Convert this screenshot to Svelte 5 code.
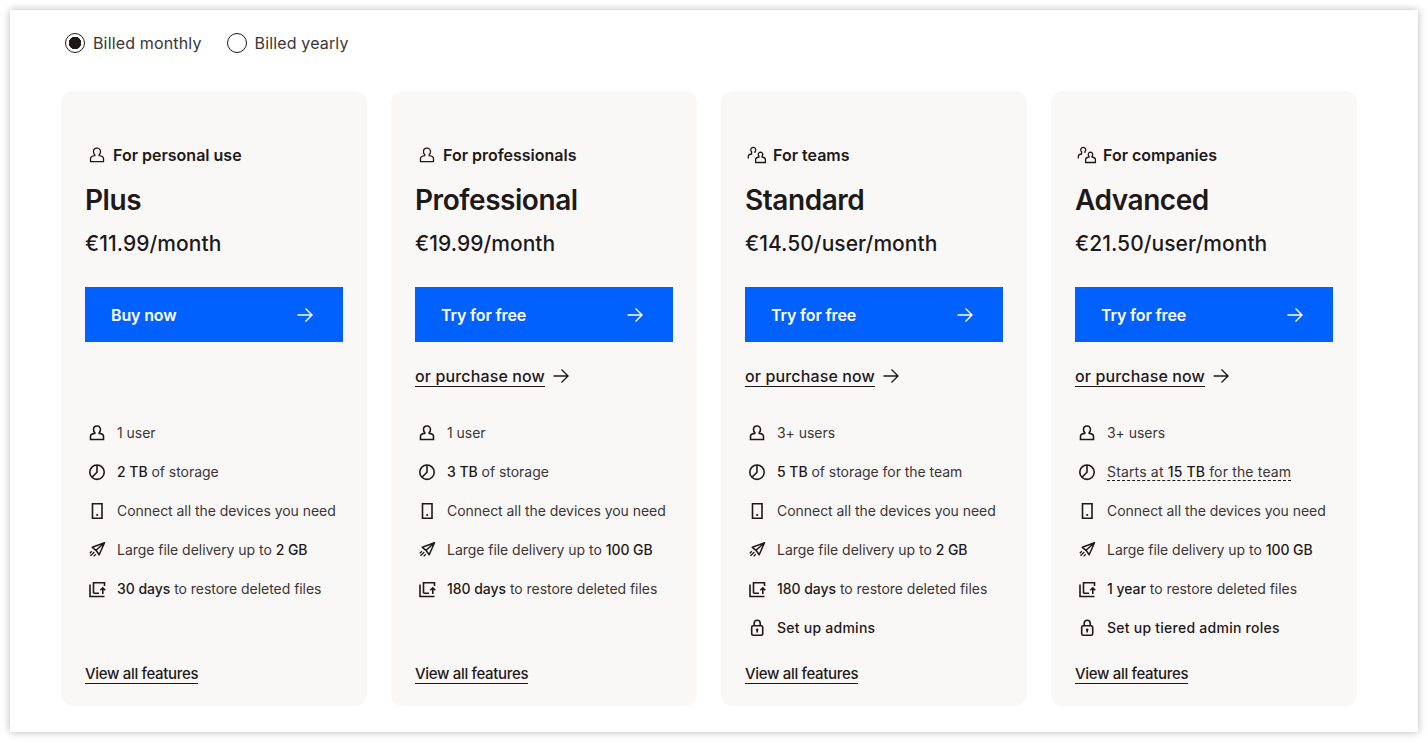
<script>
	const plans = [
		{
			audience: "For personal use",
			team: false,
			name: "Plus",
			price: "€11.99/month",
			cta: "Buy now",
			purchase: false,
			features: [
				{ icon: "user", html: "1 user" },
				{ icon: "pie", html: "<b>2 TB</b> of storage" },
				{ icon: "device", html: "Connect all the devices you need" },
				{ icon: "send", html: "Large file delivery up to <b>2 GB</b>" },
				{ icon: "restore", html: "<b>30 days</b> to restore deleted files" }
			]
		},
		{
			audience: "For professionals",
			team: false,
			name: "Professional",
			price: "€19.99/month",
			cta: "Try for free",
			purchase: true,
			features: [
				{ icon: "user", html: "1 user" },
				{ icon: "pie", html: "<b>3 TB</b> of storage" },
				{ icon: "device", html: "Connect all the devices you need" },
				{ icon: "send", html: "Large file delivery up to <b>100 GB</b>" },
				{ icon: "restore", html: "<b>180 days</b> to restore deleted files" }
			]
		},
		{
			audience: "For teams",
			team: true,
			name: "Standard",
			price: "€14.50/user/month",
			cta: "Try for free",
			purchase: true,
			features: [
				{ icon: "user", html: "3+ users" },
				{ icon: "pie", html: "<b>5 TB</b> of storage for the team" },
				{ icon: "device", html: "Connect all the devices you need" },
				{ icon: "send", html: "Large file delivery up to <b>2 GB</b>" },
				{ icon: "restore", html: "<b>180 days</b> to restore deleted files" },
				{ icon: "lock", html: '<b class="wide">Set up admins</b>' }
			]
		},
		{
			audience: "For companies",
			team: true,
			name: "Advanced",
			price: "€21.50/user/month",
			cta: "Try for free",
			purchase: true,
			features: [
				{ icon: "user", html: "3+ users" },
				{ icon: "pie", html: '<span class="dashed">Starts at <b>15 TB</b> for the team</span>' },
				{ icon: "device", html: "Connect all the devices you need" },
				{ icon: "send", html: "Large file delivery up to <b>100 GB</b>" },
				{ icon: "restore", html: "<b>1 year</b> to restore deleted files" },
				{ icon: "lock", html: '<b class="wide">Set up tiered admin roles</b>' }
			]
		}
	];

	// same person shape for the heading and the feature rows, centred on x=12
	const person =
		"M12 2.200c-2 0-3.500 1.500-3.500 3.500 0 1.400.5 2.300 1.300 3v.9c-2.500.3-4.300 1-4.300 2.900v3.200h13v-3.200c0-1.900-1.800-2.600-4.300-2.900v-.9c.8-.7 1.300-1.600 1.300-3 0-2-1.500-3.500-3.500-3.500Z";
</script>

{#snippet arrow()}
	<svg class="arrow" viewBox="0 0 16 16" fill="none" stroke="currentColor" stroke-width="1.400">
		<path d="M0.500 8H15M8.500 1.500 15 8l-6.500 6.500" />
	</svg>
{/snippet}

{#snippet icon(name)}
	<svg class="icon" viewBox="0 0 18 18" fill="none" stroke="currentColor" stroke-width="1.600">
		{#if name === "user"}
			<path d={person} transform="translate(-3 -0.200)" />
		{:else if name === "pie"}
			<circle cx="9" cy="9.200" r="7.200" />
			<path d="M9 2V9.200L3.900 14.300" />
		{:else if name === "device"}
			<path d="M4.500 1.800h9.500v14.500H4.500z" />
			<circle cx="9.200" cy="13" r="1.100" fill="currentColor" stroke="none" />
		{:else if name === "send"}
			<path d="M16.500 1.800 4.300 6.300 8 9.300l3.200 4.500L16.500 1.800ZM16.500 1.800 8 9.300" stroke-linejoin="round" stroke-width="1.500" />
			<path d="M6.300 11 2.500 14.800M7.800 13.200l-2.200 2.200M3.800 10.300 1.800 12.300" stroke-width="1.300" />
		{:else if name === "restore"}
			<path d="M2 4.500V16.500H16.500" />
			<path d="M5.500 13.300V2.700H16.500V6M5.500 13.300H11" />
			<path d="M14.800 14V8M12.300 10.300 14.800 7.800l2.500 2.500" />
		{:else if name === "lock"}
			<rect x="3.700" y="6.700" width="11" height="9.500" rx="1.500" />
			<path d="M6.200 6.700V4.200a3 3 0 0 1 6 0V6.700" />
			<circle cx="9.200" cy="10.800" r="1.300" fill="currentColor" stroke="none" />
			<path d="M9.200 11v2.400" />
		{/if}
	</svg>
{/snippet}

{#snippet teamIcon()}
	<svg class="icon head" viewBox="0 0 22 18" fill="none" stroke="currentColor" stroke-width="1.300">
		<path d="M15.500 6.200a2.300 2.300 0 0 0-1.500 4v.8c-2 .3-3.400 1-3.400 2.600v2.900h9.800v-2.900c0-1.600-1.400-2.300-3.400-2.600v-.8a2.300 2.300 0 0 0-1.500-4Z" />
		<path d="M3.300 12.500v-2c0-1.500 1.500-2.300 3.300-2.500V5.700a2.500 2.500 0 1 1 3.300 0v1.200" />
	</svg>
{/snippet}

<div class="window">
	<div class="billing">
		<label class="radio">
			<span class="dot on"></span>
			Billed monthly
		</label>
		<label class="radio">
			<span class="dot"></span>
			Billed yearly
		</label>
	</div>

	<div class="plans">
		{#each plans as plan}
			<section class="card">
				<div class="audience">
					{#if plan.team}
						{@render teamIcon()}
					{:else}
						<svg class="icon head" viewBox="0 0 22 18" fill="none" stroke="currentColor" stroke-width="1.300">
							<path d={person} />
						</svg>
					{/if}
					{plan.audience}
				</div>
				<h2>{plan.name}</h2>
				<div class="price">{plan.price}</div>
				<a class="cta" href="#top">
					{plan.cta}
					{@render arrow()}
				</a>
				<div class="purchase">
					{#if plan.purchase}
						<a href="#top">or purchase now</a>
						{@render arrow()}
					{/if}
				</div>
				<ul>
					{#each plan.features as feature}
						<li>
							{@render icon(feature.icon)}
							<span>{@html feature.html}</span>
						</li>
					{/each}
				</ul>
				<a class="all" href="#top">View all features</a>
			</section>
		{/each}
	</div>
</div>

<style>
	:global(body) {
		background: #fff;
		font-family: Inter, "Liberation Sans", sans-serif;
		color: #1e1919;
	}

	.window {
		box-sizing: border-box;
		margin: 10px;
		width: 1408px;
		height: 722px;
		padding: 21px 0 0 51px;
		background: #fff;
		box-shadow: 0 0 8px rgba(0, 0, 0, 0.28);
	}

	.billing {
		display: flex;
		gap: 25px;
		height: 24px;
		padding-left: 4px;
	}

	.radio {
		display: flex;
		align-items: center;
		gap: 8px;
		font-size: 16px;
		letter-spacing: 0.15px;
		color: #3a3535;
	}

	.dot {
		box-sizing: border-box;
		width: 20px;
		height: 20px;
		border: 1.5px solid #1e1919;
		border-radius: 50%;
		background: #fff;
	}

	.dot.on {
		background: radial-gradient(circle, #1e1919 0 6px, #fff 6.500px);
	}

	.plans {
		display: flex;
		gap: 24px;
		margin-top: 36px;
	}

	.card {
		box-sizing: border-box;
		display: flex;
		flex-direction: column;
		width: 306px;
		height: 615px;
		padding: 54px 24px 22px;
		background: #faf8f7;
		border-radius: 12px;
	}

	.audience {
		display: flex;
		align-items: center;
		gap: 6px;
		height: 20px;
		font-size: 16px;
		font-weight: 600;
		letter-spacing: 0;
	}

	h2 {
		margin: 17px 0 0;
		height: 36px;
		font-size: 28px;
		line-height: 36px;
		font-weight: 600;
		letter-spacing: -0.45px;
	}

	.price {
		margin-top: 12px;
		height: 28px;
		font-size: 21px;
		line-height: 28px;
		font-weight: 500;
		letter-spacing: 0.05px;
	}

	.cta {
		display: flex;
		align-items: center;
		justify-content: space-between;
		box-sizing: border-box;
		margin-top: 29px;
		height: 55px;
		padding: 0 30px 0 26px;
		background: #0061fe;
		color: #fff;
		font-size: 16px;
		font-weight: 600;
		letter-spacing: -0.15px;
		text-decoration: none;
	}

	.arrow {
		width: 16px;
		height: 16px;
	}

	.purchase {
		display: flex;
		align-items: center;
		gap: 8px;
		margin-top: 23px;
		height: 22px;
	}

	.purchase a {
		color: inherit;
		font-size: 16px;
		font-weight: 500;
		letter-spacing: 0.13px;
		text-decoration: none;
		border-bottom: 1px solid #1e1919;
	}

	ul {
		list-style: none;
		margin: 26px 0 0;
		padding: 0;
	}

	li {
		display: flex;
		align-items: center;
		gap: 11px;
		height: 39px;
		padding-left: 3px;
		font-size: 14px;
		letter-spacing: -0.04px;
		color: #3a3535;
	}

	li :global(b) {
		font-weight: 500;
		color: #1e1919;
	}

	li :global(b.wide) {
		letter-spacing: 0.25px;
	}

	li :global(.dashed) {
		letter-spacing: 0.16px;
		border-bottom: 1px dashed #1e1919;
	}

	.icon {
		flex: none;
		width: 18px;
		height: 18px;
		color: #1e1919;
	}

	.icon.head {
		width: 22px;
	}

	.all {
		margin-top: auto;
		align-self: flex-start;
		color: inherit;
		font-size: 15px;
		font-weight: 500;
		letter-spacing: -0.33px;
		text-decoration: none;
		border-bottom: 1px solid #1e1919;
	}
</style>
